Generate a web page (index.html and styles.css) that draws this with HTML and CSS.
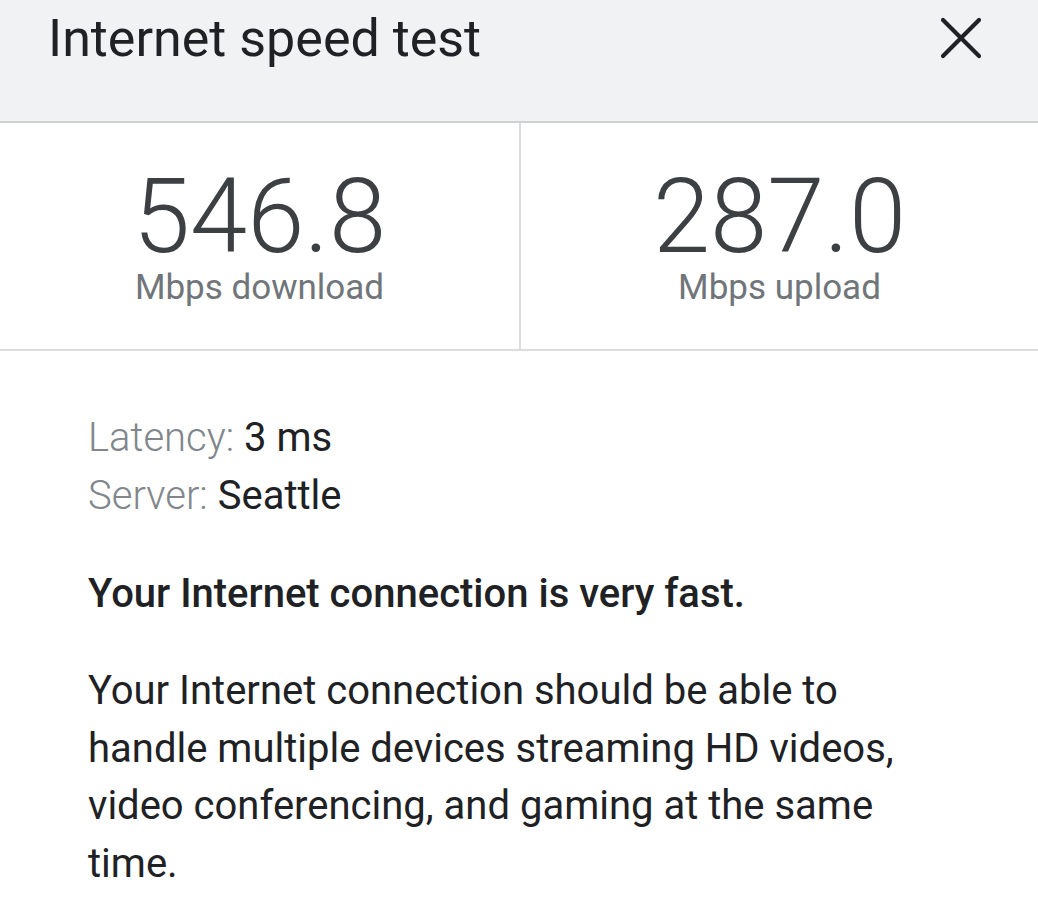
FILE: index.html
```html
<!DOCTYPE html>
<html>
<head>
<meta charset="utf-8">
<link rel="stylesheet" href="styles.css">
</head>
<body>
<div class="sheet">
  <header class="header">
    <h1 class="title">Internet speed test</h1>
    <button class="close" aria-label="Close">
      <svg width="42" height="42" viewBox="0 0 42 42"><path d="M3 3 L39 39 M39 3 L3 39" stroke="#202124" stroke-width="4.2" stroke-linecap="round"/></svg>
    </button>
  </header>
  <section class="stats">
    <div class="stat">
      <div class="num">546.8</div>
      <div class="unit">Mbps download</div>
    </div>
    <div class="stat">
      <div class="num">287.0</div>
      <div class="unit">Mbps upload</div>
    </div>
  </section>
  <section class="details">
    <div class="meta">
      <div><span class="label">Latency:</span> <span class="val">3 ms</span></div>
      <div><span class="label">Server:</span> <span class="val">Seattle</span></div>
    </div>
    <p class="verdict">Your Internet connection is very fast.</p>
    <p class="desc">Your Internet connection should be able to handle multiple devices streaming HD videos, video conferencing, and gaming at the same time.</p>
  </section>
</div>
</body>
</html>
```
FILE: styles.css
```css
* { box-sizing: border-box; }
html, body { margin: 0; padding: 0; background: #fff; }
body { font-family: Roboto, "Noto Sans", sans-serif; color: #202124; }
.sheet { width: 1038px; }
.header {
  height: 123px;
  background: #f1f2f4;
  border-bottom: 2px solid #cfd0d2;
  display: flex;
  align-items: flex-start;
  justify-content: space-between;
  padding: 0 56px 0 48px;
}
.title {
  margin: 0;
  font-size: 52px;
  font-weight: 400;
  line-height: 60px;
  padding-top: 9px;
  color: #202124;
}
.close {
  border: 0;
  background: none;
  padding: 0;
  margin-top: 17px;
  width: 42px;
  height: 42px;
}
.stats {
  display: grid;
  grid-template-columns: 519px 1fr;
  height: 228px;
  border-bottom: 2px solid #dcdcdc;
}
.stat {
  display: flex;
  flex-direction: column;
  align-items: center;
  padding-top: 44px;
}
.stat + .stat { border-left: 2px solid #dcdcdc; }
.num {
  font-size: 103px;
  font-weight: 300;
  line-height: 100px;
  color: #3c4043;
}
.unit {
  font-size: 35px;
  line-height: 40px;
  margin-top: 1px;
  color: #70757a;
}
.details { padding: 58px 100px 0 88px; }
.meta { font-size: 40px; line-height: 58px; }
.label { color: #80868b; font-weight: 300; }
.val { color: #202124; }
.verdict {
  margin: 40px 0 0;
  font-size: 40px;
  font-weight: 500;
  line-height: 58px;
}
.desc {
  margin: 39px 0 0;
  font-size: 40px;
  line-height: 57.5px;
  color: #202124;
}
```
